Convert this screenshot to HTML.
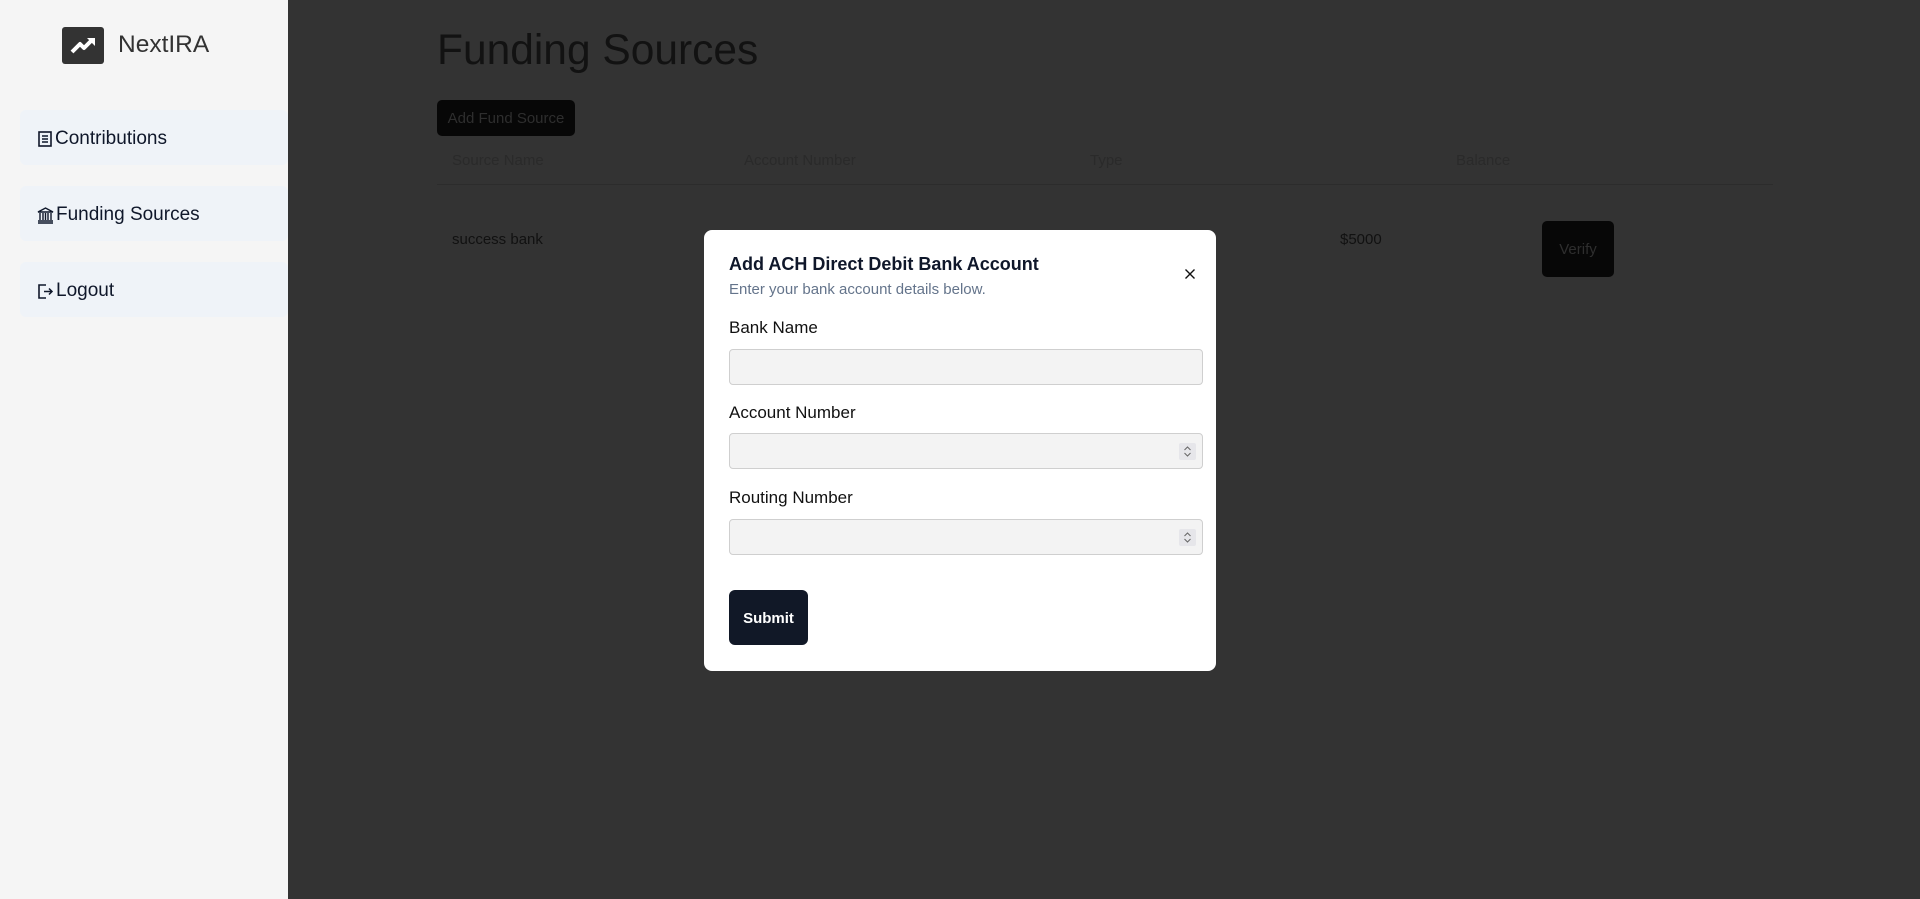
<!DOCTYPE html>
<html><head><meta charset="utf-8"><style>
*{box-sizing:border-box;margin:0;padding:0}
body{width:1920px;height:899px;overflow:hidden;font-family:"Liberation Sans",sans-serif;background:#333;position:relative}
.side{position:absolute;left:0;top:0;width:288px;height:899px;background:#f5f5f5}
.logo{position:absolute;left:62px;top:27px;width:42px;height:37px;background:#333;border-radius:3px}
.brand{position:absolute;left:118px;top:31px;font-size:24.5px;color:#333}
.nav{position:absolute;left:20px;width:268px;height:55px;background:#eff3f8;border-radius:6px;font-size:19px;color:#0f172a;display:flex;align-items:center;padding-left:17px;padding-top:3px}
.nav svg{margin-right:2px}
.main{position:absolute;left:288px;top:0;right:0;bottom:0;color:#111}
h1{position:absolute;left:149px;top:27px;font-size:42.5px;font-weight:400;color:#121212}
.addbtn{position:absolute;left:149px;top:100px;width:138px;height:36px;background:#070707;border-radius:5px;color:#2e2e2e;font-size:15px;line-height:38px;text-align:center}
.th{position:absolute;top:152px;font-size:15px;color:#2a2a2a}
.line{position:absolute;left:149px;top:184px;width:1336px;height:1px;background:#2c2c2c}
.td{position:absolute;top:231px;font-size:15px;color:#111}
.verify{position:absolute;left:1254px;top:221px;width:72px;height:56px;background:#070707;border-radius:5px;color:#2e2e2e;font-size:15px;line-height:58px;text-align:center}
.modal{position:absolute;left:704px;top:230px;width:512px;height:441px;background:#fff;border-radius:8px}
.mt{position:absolute;left:25px;top:24px;font-size:18px;font-weight:700;color:#0f172a}
.ms{position:absolute;left:25px;top:51px;font-size:15px;color:#64748b}
.x{position:absolute;left:480px;top:38px}
.lbl{position:absolute;left:25px;font-size:17px;color:#111}
.inp{position:absolute;left:25px;width:474px;height:36px;background:#f3f3f3;border:1px solid #cfcfcf;border-radius:4px}
.spin{position:absolute;right:6px;top:9px;width:17px;height:17px;background:#e6e6ea;border-radius:2px}
.sub{position:absolute;left:25px;top:360px;width:79px;height:55px;background:#111827;border-radius:6px;color:#fff;font-size:15px;font-weight:700;line-height:57px;text-align:center}
</style></head><body>
<div class="side">
<div class="logo"><svg width="42" height="37" viewBox="0 0 42 37"><path d="M10 25 L18 17 L22 21 L30 13" stroke="#fff" stroke-width="4" fill="none" stroke-linejoin="round"/><path d="M25 11 L33 11 L33 19 Z" fill="#fff"/></svg></div>
<div class="brand">NextIRA</div>
<div class="nav" style="top:110px"><svg width="16" height="18" viewBox="0 0 16 18"><rect x="2" y="2" width="12" height="14" fill="none" stroke="#0f172a" stroke-width="1.6"/><path d="M5 6h6M5 9h6M5 12h6" stroke="#0f172a" stroke-width="1.4"/></svg>Contributions</div>
<div class="nav" style="top:186px"><svg width="17" height="18" viewBox="0 0 17 18"><path d="M1 6 L8.5 2 L16 6 Z" fill="none" stroke="#0f172a" stroke-width="1.4"/><path d="M3 7v7M6 7v7M8.5 7v7M11 7v7M14 7v7M1 15h15M1 17h15" stroke="#0f172a" stroke-width="1.4"/></svg>Funding Sources</div>
<div class="nav" style="top:262px"><svg width="17" height="18" viewBox="0 0 17 18"><path d="M9 3H2v13h7" fill="none" stroke="#0f172a" stroke-width="1.6"/><path d="M7 9.5h8M12 6.5l3 3-3 3" fill="none" stroke="#0f172a" stroke-width="1.5"/></svg>Logout</div>
</div>
<div class="main">
<h1>Funding Sources</h1>
<div class="addbtn">Add Fund Source</div>
<div class="th" style="left:164px">Source Name</div>
<div class="th" style="left:456px">Account Number</div>
<div class="th" style="left:802px">Type</div>
<div class="th" style="left:1168px">Balance</div>
<div class="line"></div>
<div class="td" style="left:164px">success bank</div>
<div class="td" style="left:1052px">$5000</div>
<div class="verify">Verify</div>
</div>
<div class="modal">
<div class="mt">Add ACH Direct Debit Bank Account</div>
<div class="ms">Enter your bank account details below.</div>
<svg class="x" width="12" height="12" viewBox="0 0 12 12"><path d="M1.5 1.5l9 9M10.5 1.5l-9 9" stroke="#111" stroke-width="1.4"/></svg>
<div class="lbl" style="top:88px">Bank Name</div>
<div class="inp" style="top:119px"></div>
<div class="lbl" style="top:173px">Account Number</div>
<div class="inp" style="top:203px"><div class="spin"><svg width="17" height="17" viewBox="0 0 17 17"><path d="M5.5 7l3-3 3 3M5.5 10l3 3 3-3" stroke="#666" stroke-width="1" fill="none"/></svg></div></div>
<div class="lbl" style="top:258px">Routing Number</div>
<div class="inp" style="top:289px"><div class="spin"><svg width="17" height="17" viewBox="0 0 17 17"><path d="M5.5 7l3-3 3 3M5.5 10l3 3 3-3" stroke="#666" stroke-width="1" fill="none"/></svg></div></div>
<div class="sub">Submit</div>
</div>
</body></html>
